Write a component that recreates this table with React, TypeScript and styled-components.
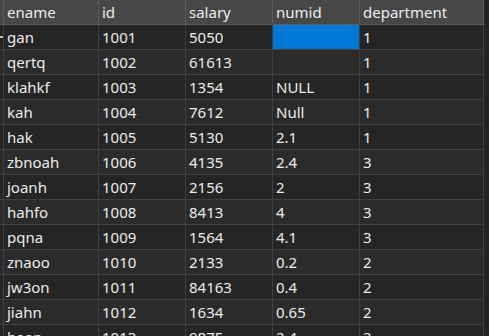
import styled, { createGlobalStyle } from 'styled-components'

const GlobalStyle = createGlobalStyle`
  html, body {
    margin: 0;
    padding: 0;
    background-color: #232323;
    overflow: hidden;
  }
`

const Grid = styled.div`
  width: 489px;
  height: 336px;
  overflow: hidden;
  background-color: #232323;
  font-family: 'Noto Sans', 'Open Sans', sans-serif;
  font-size: 15px;
`

const Row = styled.div<{ header?: boolean; odd?: boolean }>`
  display: flex;
  width: 484px;
  height: 25px;
  background-color: ${({ header, odd }) => (header ? '#474747' : odd ? '#2b2b2b' : '#252525')};
  color: ${({ header }) => (header ? '#ececec' : '#ebebeb')};
`

const Marker = styled.div<{ header?: boolean; current?: boolean }>`
  position: relative;
  width: 3px;
  flex: none;
  border-right: 1px solid ${({ header }) => (header ? '#5a5a5a' : '#404040')};
  border-bottom: 1px solid ${({ header }) => (header ? '#5a5a5a' : '#404040')};

  ${({ current }) =>
    current &&
    `&::after {
      content: '';
      position: absolute;
      left: 0;
      top: 11px;
      width: 3px;
      height: 2px;
      background-color: #bdbdbd;
    }`}
`

const Cell = styled.div<{ w: number; header?: boolean; selected?: boolean }>`
  width: ${({ w }) => w}px;
  flex: none;
  box-sizing: border-box;
  padding-left: 3px;
  line-height: 24px;
  white-space: nowrap;
  overflow: hidden;
  border-right: 1px solid ${({ header }) => (header ? '#5a5a5a' : '#404040')};
  border-bottom: 1px solid ${({ header }) => (header ? '#5a5a5a' : '#404040')};
  background-color: ${({ selected }) => (selected ? '#0078d7' : 'transparent')};
`

const columns = [
  { key: 'ename', w: 95 },
  { key: 'id', w: 87 },
  { key: 'salary', w: 87 },
  { key: 'numid', w: 87 },
  { key: 'department', w: 124 },
]

const rows = [
  ['gan', '1001', '5050', '', '1'],
  ['qertq', '1002', '61613', '', '1'],
  ['klahkf', '1003', '1354', 'NULL', '1'],
  ['kah', '1004', '7612', 'Null', '1'],
  ['hak', '1005', '5130', '2.1', '1'],
  ['zbnoah', '1006', '4135', '2.4', '3'],
  ['joanh', '1007', '2156', '2', '3'],
  ['hahfo', '1008', '8413', '4', '3'],
  ['pqna', '1009', '1564', '4.1', '3'],
  ['znaoo', '1010', '2133', '0.2', '2'],
  ['jw3on', '1011', '84163', '0.4', '2'],
  ['jiahn', '1012', '1634', '0.65', '2'],
  ['haan', '1013', '9875', '2.4', '2'],
]

export default function App() {
  return (
    <>
      <GlobalStyle />
      <Grid>
        <Row header>
          <Marker header />
          {columns.map((col) => (
            <Cell key={col.key} w={col.w} header>
              {col.key}
            </Cell>
          ))}
        </Row>
        {rows.map((row, i) => (
          <Row key={row[0]} odd={i % 2 === 1}>
            <Marker current={i === 0} />
            {row.map((value, j) => (
              <Cell key={columns[j].key} w={columns[j].w} selected={i === 0 && j === 3}>
                {value}
              </Cell>
            ))}
          </Row>
        ))}
      </Grid>
    </>
  )
}
